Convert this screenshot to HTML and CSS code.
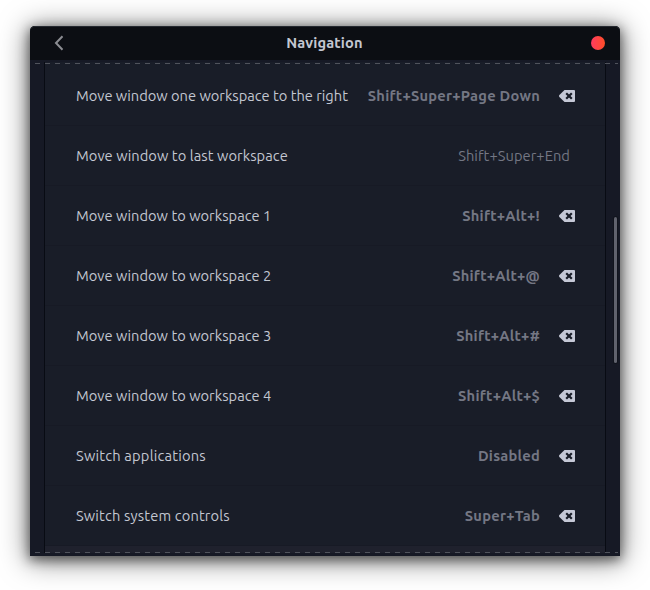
FILE: index.html
```html
<!DOCTYPE html>
<html lang="en">
<head>
<meta charset="utf-8">
<title>Navigation</title>
<link rel="stylesheet" href="styles.css">
</head>
<body>
<svg class="defs" width="0" height="0"><symbol id="clear" viewBox="0 0 16 12"><path class="key" d="M5.5 0H15Q16 0 16 1V11Q16 12 15 12H5.5L.4 7Q-.4 6 .4 5Z"/><path class="cross" d="M7.2 3.2L12.8 8.8M12.8 3.2L7.2 8.8"/></symbol></svg>
<main class="window">
  <header class="titlebar">
    <svg class="back" width="10" height="16" viewBox="0 0 10 16"><path d="M8.5 1.3L2 8L8.5 14.7"/></svg>
    <h1>Navigation</h1>
    <span class="close"></span>
  </header>
  <section class="content">
    <div class="list">
      <div class="row"><span class="name">Move window one workspace to the right</span><b>Shift+Super+Page Down</b><svg class="clear"><use href="#clear"/></svg></div>
      <div class="row"><span class="name last">Move window to last workspace</span><span class="default">Shift+Super+End</span></div>
      <div class="row"><span class="name numbered">Move window to workspace 1</span><b>Shift+Alt+!</b><svg class="clear"><use href="#clear"/></svg></div>
      <div class="row"><span class="name numbered">Move window to workspace 2</span><b>Shift+Alt+@</b><svg class="clear"><use href="#clear"/></svg></div>
      <div class="row"><span class="name numbered">Move window to workspace 3</span><b>Shift+Alt+#</b><svg class="clear"><use href="#clear"/></svg></div>
      <div class="row"><span class="name numbered">Move window to workspace 4</span><b>Shift+Alt+$</b><svg class="clear"><use href="#clear"/></svg></div>
      <div class="row"><span class="name apps">Switch applications</span><b>Disabled</b><svg class="clear"><use href="#clear"/></svg></div>
      <div class="row"><span class="name controls">Switch system controls</span><b>Super+Tab</b><svg class="clear"><use href="#clear"/></svg></div>
      <div class="next"></div>
    </div>
    <div class="edge top"></div>
    <div class="edge bottom"></div>
    <div class="scrollbar"></div>
  </section>
</main>
</body>
</html>
```
FILE: styles.css
```css
* { box-sizing: border-box; }
body { margin: 0; background: #fff; overflow: hidden; font: 14.667px/20px Ubuntu, "Noto Sans", sans-serif; color: #c3c7d1; }
.defs { position: absolute; }
.window { width: 590px; height: 530px; margin: 26px 30px 34px; background: #161925; border-radius: 5px 5px 0 0; box-shadow: 0 3px 12px 1px rgba(0,0,0,.5), 0 3px 28px 2px rgba(0,0,0,.5); }
.titlebar { height: 34px; display: grid; grid-template-columns: 60px 1fr 60px; align-items: center; background: #0c0e13; border-radius: 5px 5px 0 0; box-shadow: inset 0 1px #252930; }
.back { margin-left: 24px; fill: none; stroke: #8c8d92; stroke-width: 2; }
h1 { margin: 0; font-size: 14.667px; line-height: 20px; text-align: center; letter-spacing: .15px; text-indent: -1px; }
.close { width: 14px; height: 14px; margin-left: 31px; border-radius: 50%; background: linear-gradient(90deg, #ff3c60, #ff4d27); }
.content { position: relative; height: 496px; padding: 2px 14px 3px; }
.list { height: 491px; padding-top: 4px; background: #191d28; border: solid #080b13; border-width: 0 1px; overflow: hidden; }
.row { height: 60px; display: flex; align-items: center; padding: 0 30px 0 31px; border-bottom: 1px solid #171a25; white-space: nowrap; }
.name { margin-right: auto; }
.last { letter-spacing: .07px; }
.numbered { letter-spacing: .03px; }
.apps { letter-spacing: .21px; }
.controls { letter-spacing: .16px; }
.row b { color: #747784; letter-spacing: .25px; }
.default { color: #747784; margin-right: 5px; letter-spacing: .06px; }
.clear { width: 16px; height: 12px; margin-left: 19px; flex: none; }
.key { fill: #c5c8d6; }
.cross { stroke: #191d28; stroke-width: 2.2; }
.next { height: 7px; background: #1f212d; }
.edge { position: absolute; left: 5px; right: 2px; height: 1px; background: repeating-linear-gradient(90deg, #50535c 0 5px, transparent 5px 10px); }
.top { top: 3px; }
.bottom { bottom: 3px; }
.scrollbar { position: absolute; right: 3px; top: 157px; width: 3px; height: 146px; border-radius: 2px; background: #60626d; box-shadow: 0 0 0 1px #11141d; }
```
